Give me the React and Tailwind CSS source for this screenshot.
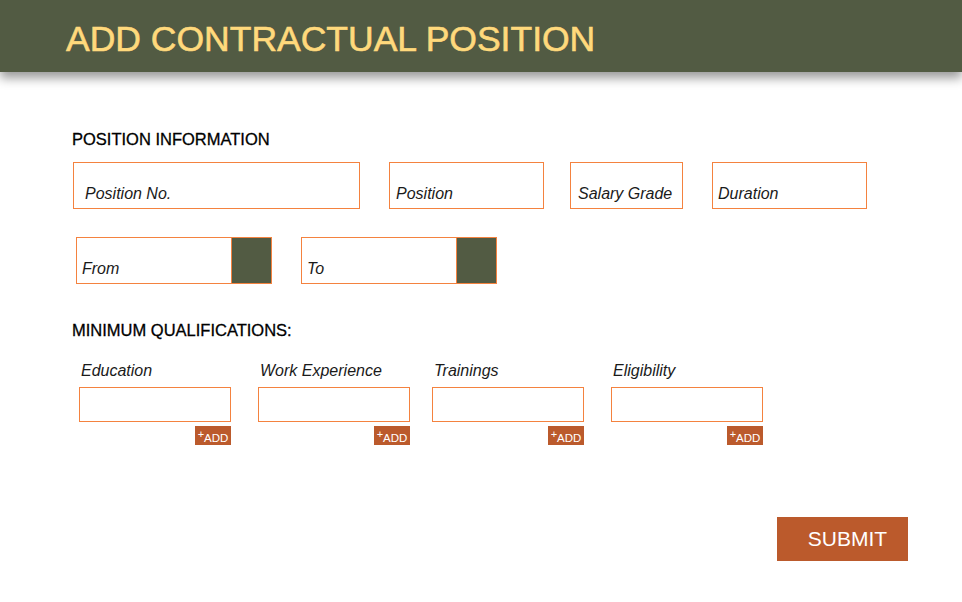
const font = { fontFamily: '"Liberation Sans", Arial, sans-serif' };

const Field = ({ label, width, pl }) => (
    <div className={`flex h-[47px] items-end border border-[#f4823f] pb-[4px] ${width} ${pl}`}>
        <span className="text-[16px] italic leading-[20px] text-[#1a1a1a]">{label}</span>
    </div>
);

const DateField = ({ label }) => (
    <div className="flex h-[47px] w-[196px] border border-[#f4823f]">
        <div className="flex flex-1 items-end pb-[4px] pl-[5px]">
            <span className="text-[16px] italic leading-[20px] text-[#1a1a1a]">{label}</span>
        </div>
        <div className="w-[40px] border-l border-[#f4823f] bg-[#525b43]" />
    </div>
);

const Qualification = ({ label, width }) => (
    <div className={`flex flex-col ${width}`}>
        <span className="pl-[2px] text-[16px] italic leading-[20px] text-[#1a1a1a]">{label}</span>
        <div className="mt-[6px] h-[35px] w-[152px] border border-[#f4823f]" />
        <div className="flex w-[152px] justify-end pt-[4px]">
            <button className="flex h-[19px] w-[36px] items-end justify-center bg-[#bb5a2c] pb-[1px] text-white">
                <span className="mb-[5px] text-[11px] leading-[10px]">+</span>
                <span className="text-[11.5px] leading-[12px]">ADD</span>
            </button>
        </div>
    </div>
);

export default function App() {
    return (
        <div className="min-h-[602px] w-[962px] bg-white" style={font}>
            <header className="relative z-10 flex h-[72px] items-center bg-[#525b43] pl-[66px] pt-[5px] shadow-[0_6px_10px_rgba(0,0,0,0.4)]">
                <h1 className="text-[35.5px] leading-[40px] text-[#ffd97c] [-webkit-text-stroke:0.6px_#ffd97c]">
                    ADD CONTRACTUAL POSITION
                </h1>
            </header>

            <main className="pl-[72px] pt-[57px]">
                <h2 className="text-[16.5px] leading-[20px] text-black [-webkit-text-stroke:0.3px_#000]">POSITION INFORMATION</h2>

                <div className="mt-[13px] flex pl-[1px]">
                    <Field label="Position No." width="w-[287px]" pl="pl-[11px]" />
                    <div className="ml-[29px]">
                        <Field label="Position" width="w-[155px]" pl="pl-[6px]" />
                    </div>
                    <div className="ml-[26px]">
                        <Field label="Salary Grade" width="w-[113px]" pl="pl-[7px]" />
                    </div>
                    <div className="ml-[29px]">
                        <Field label="Duration" width="w-[155px]" pl="pl-[5px]" />
                    </div>
                </div>

                <div className="mt-[28px] flex gap-[29px] pl-[4px]">
                    <DateField label="From" />
                    <DateField label="To" />
                </div>

                <h2 className="mt-[36px] text-[16.5px] leading-[20px] text-black [-webkit-text-stroke:0.3px_#000]">MINIMUM QUALIFICATIONS:</h2>

                <div className="mt-[21px] flex pl-[7px]">
                    <Qualification label="Education" width="w-[179px]" />
                    <Qualification label="Work Experience" width="w-[174px]" />
                    <Qualification label="Trainings" width="w-[179px]" />
                    <Qualification label="Eligibility" width="w-[152px]" />
                </div>

                <div className="mt-[72px] flex pl-[705px]">
                    <button className="flex h-[44px] w-[131px] items-center justify-center bg-[#bb5a2c] pl-[10px] text-[21px] text-white">
                        SUBMIT
                    </button>
                </div>
            </main>
        </div>
    );
}
